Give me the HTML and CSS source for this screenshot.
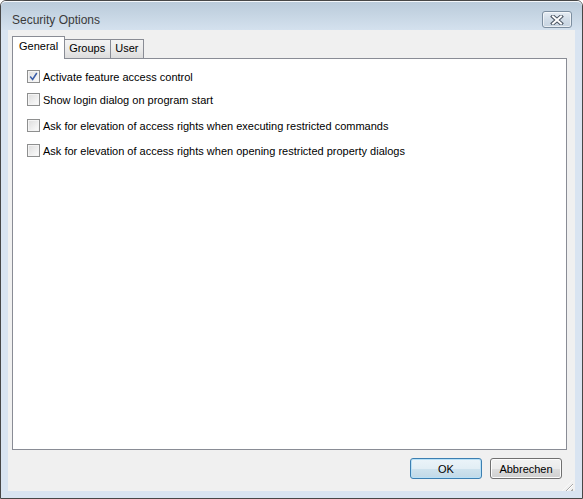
FILE: index.html
```html
<!DOCTYPE html>
<html lang="en">
<head>
    <meta charset="UTF-8">
    <title>Security Options</title>
    <link rel="stylesheet" href="styles.css">
</head>
<body>
    <div class="window">
        <div class="titlebar">
            <span class="title">Security Options</span>
            <button class="close-btn" aria-label="Close">
                <svg width="16" height="10" viewBox="0 0 16 10">
                    <path d="M4 1.5 L12 8.5 M12 1.5 L4 8.5" stroke="#4b5563" stroke-width="4" stroke-linecap="square" fill="none"/>
                    <path d="M4 1.5 L12 8.5 M12 1.5 L4 8.5" stroke="#ffffff" stroke-width="2" stroke-linecap="square" fill="none"/>
                </svg>
            </button>
        </div>

        <div class="client">
            <div class="tabs">
                <div class="tab active">General</div>
                <div class="tab">Groups</div>
                <div class="tab">User</div>
            </div>

            <div class="panel">
                <label class="option first">
                    <span class="checkbox checked">
                        <svg width="9" height="9" viewBox="0 0 9 9">
                            <path d="M1.2 4.6 L3.6 7.4 L7.8 1" stroke="#3a5da8" stroke-width="1.5" fill="none"/>
                        </svg>
                    </span>
                    Activate feature access control
                </label>
                <label class="option">
                    <span class="checkbox"></span>
                    Show login dialog on program start
                </label>
                <label class="option spaced">
                    <span class="checkbox"></span>
                    Ask for elevation of access rights when executing restricted commands
                </label>
                <label class="option tight">
                    <span class="checkbox"></span>
                    Ask for elevation of access rights when opening restricted property dialogs
                </label>
            </div>

            <div class="footer">
                <button class="btn default">OK</button>
                <button class="btn">Abbrechen</button>
            </div>

            <div class="grip"></div>
        </div>
    </div>
</body>
</html>
```

FILE: styles.css
```css
* {
    margin: 0;
    padding: 0;
    box-sizing: border-box;
    font-family: 'Liberation Sans', Arial, sans-serif;
}

body {
    width: 583px;
    height: 499px;
    overflow: hidden;
    background: #ffffff;
}

.window {
    width: 583px;
    height: 499px;
    border: 1px solid #474747;
    border-radius: 6px 6px 0 0;
    background: #d9e4f1;
    display: flex;
    flex-direction: column;
    padding: 0 7px 7px 7px;
}

.titlebar {
    height: 29px;
    margin: 0 -7px;
    padding: 0 10px 0 11px;
    border-top: 1px solid #f4f7fa;
    border-radius: 5px 5px 0 0;
    background: linear-gradient(to bottom, #bacbda 0%, #d4e1ee 100%);
    display: flex;
    align-items: flex-start;
    justify-content: space-between;
}

.title {
    font-size: 12px;
    color: #3a3a3a;
    margin-top: 11px;
}

.close-btn {
    width: 30px;
    height: 17px;
    margin-top: 9px;
    border: 1px solid #7c8ea0;
    border-radius: 3px;
    background: linear-gradient(to bottom, #e6edf4 0%, #d2dde8 50%, #c7d4e1 100%);
    box-shadow: inset 0 0 0 1px rgba(255, 255, 255, 0.6);
    display: flex;
    align-items: center;
    justify-content: center;
}

.client {
    flex: 1;
    background: #f0f0f0;
    display: flex;
    flex-direction: column;
    padding: 6px 8px 0 4px;
    position: relative;
}

.tabs {
    display: flex;
    align-items: flex-end;
    height: 22px;
    position: relative;
    z-index: 1;
}

.tab {
    height: 19px;
    padding: 2px 5px 0 4px;
    font-size: 11px;
    color: #000;
    border: 1px solid #898c95;
    border-bottom: none;
    border-left: none;
    background: linear-gradient(to bottom, #f3f3f3 0%, #ebebeb 50%, #dcdcdc 100%);
}

.tab.active {
    height: 23px;
    margin-bottom: -1px;
    padding: 3px 6px 0 6px;
    border-left: 1px solid #898c95;
    border-right: 1px solid #898c95;
    background: #ffffff;
}

.tab.active + .tab {
    border-left: none;
}

.panel {
    height: 392px;
    background: #ffffff;
    border: 1px solid #898c95;
    display: flex;
    flex-direction: column;
    padding: 11px 0 0 14px;
}

.option {
    display: flex;
    align-items: center;
    gap: 3px;
    font-size: 11px;
    color: #000;
    height: 13px;
    margin-top: 10px;
}

.option.first {
    margin-top: 0;
}

.option.spaced {
    margin-top: 13px;
}

.option.tight {
    margin-top: 12px;
}

.checkbox {
    width: 13px;
    height: 13px;
    border: 1px solid #8e8f8f;
    background: linear-gradient(135deg, #dcdcdc 0%, #f0f0f0 60%, #fdfdfd 100%);
    box-shadow: inset 0 0 0 1px #f4f4f4;
    display: flex;
    align-items: center;
    justify-content: center;
    flex-shrink: 0;
}

.footer {
    display: flex;
    justify-content: flex-end;
    gap: 8px;
    padding: 8px 5px 0 0;
}

.btn {
    width: 72px;
    height: 21px;
    font-size: 11px;
    color: #000;
    border: 1px solid #707070;
    border-radius: 3px;
    background: linear-gradient(to bottom, #f2f2f2 0%, #ebebeb 50%, #dddddd 51%, #cfcfcf 100%);
    box-shadow: inset 0 0 0 1px #fcfcfc;
}

.btn.default {
    border-color: #3c7fb1;
    box-shadow: inset 0 0 0 1px #b9e1f7;
    background: linear-gradient(to bottom, #ebf4f9 0%, #e2eef5 50%, #cfe3ee 51%, #c1d9e7 100%);
}

.grip {
    position: absolute;
    right: 2px;
    bottom: 0;
    width: 11px;
    height: 11px;
    background: repeating-linear-gradient(135deg, transparent 0 2px, #a8a8a8 2px 3px, #ffffff 3px 4px);
    clip-path: polygon(100% 0, 100% 100%, 0 100%);
}
```
